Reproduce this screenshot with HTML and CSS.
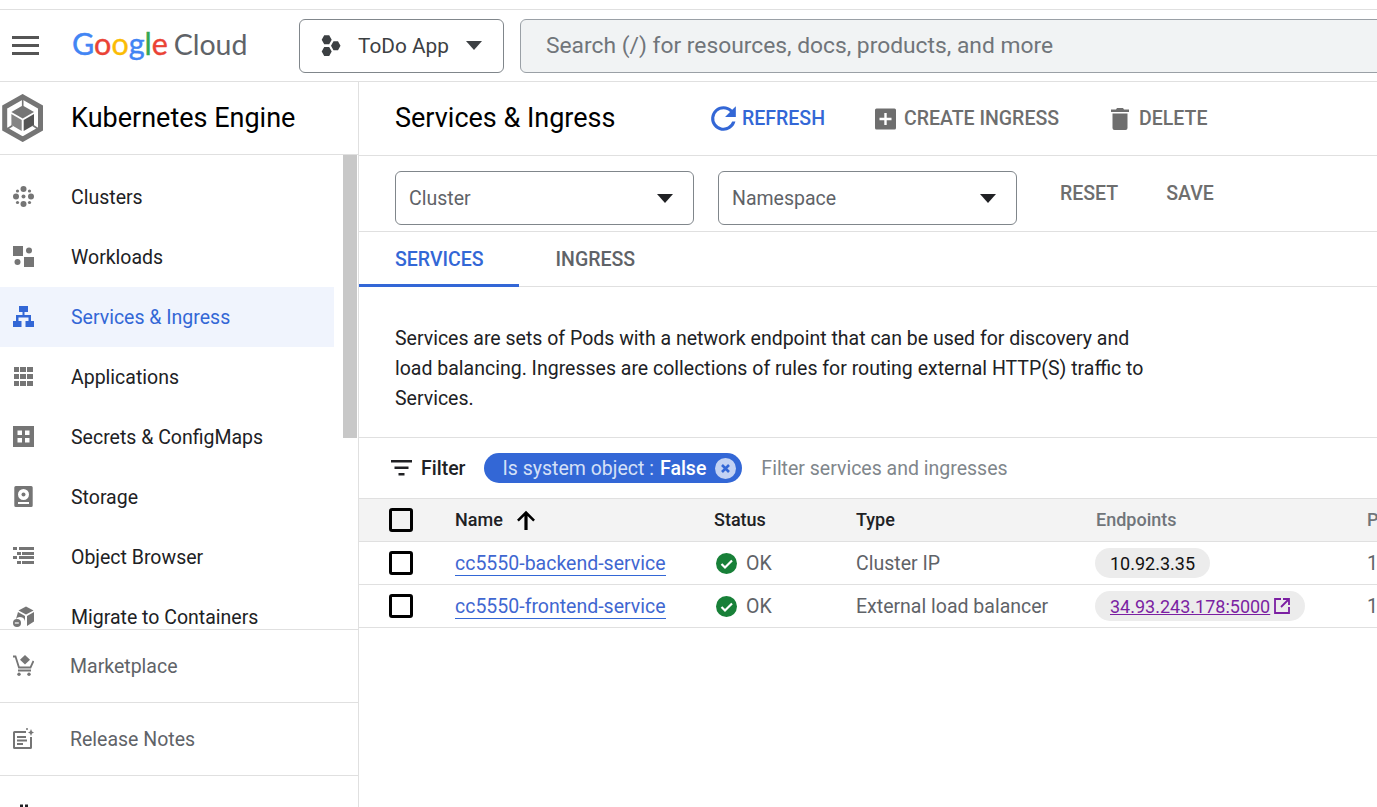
FILE: index.html
```html
<!DOCTYPE html>
<html lang="en">
<head>
    <meta charset="UTF-8">
    <meta name="viewport" content="width=device-width, initial-scale=1.0">
    <title>Services &amp; Ingress - Kubernetes Engine</title>
    <link rel="stylesheet" href="styles.css">
</head>
<body>
    <div class="top-strip"></div>

    <header class="topbar">
        <svg class="menu-icon" width="27" height="20" viewBox="0 0 27 20"><path d="M0 0h27v3H0zM0 8h27v3H0zM0 16h27v3H0z"/></svg>
        <div class="logo">
            <span class="g-blue">G</span><span class="g-red">o</span><span class="g-yellow">o</span><span class="g-blue">g</span><span class="g-green">l</span><span class="g-red">e</span>
            <span class="logo-cloud">Cloud</span>
        </div>
        <button class="project-btn">
            <svg width="22" height="22" viewBox="0 0 22 22" fill="#3c4043"><path d="M1.700 4.800l2.500-4.500h5l2.500 4.500-2.500 4.500h-5zM1.700 16.500l2.500-4.500h5l2.500 4.500-2.500 4.500h-5zM11 10.700l2.500-4.500h4.500l2.500 4.500-2.500 4.500h-4.500z"/></svg>
            <span>ToDo App</span>
            <i class="caret caret-gray"></i>
        </button>
        <div class="search">Search (/) for resources, docs, products, and more</div>
    </header>

    <div class="layout">
        <aside class="sidebar">
            <div class="side-head">
                <svg class="k8s-icon" width="44" height="48" viewBox="0 0 44 48">
                    <path d="M21.700 2.800L39.500 13V35L21.700 45.200 3.700 35V13z" fill="none" stroke="#757575" stroke-width="5"/>
                    <path d="M21.700 5v7M5.500 35.500l6-4M38 35.500l-6-4" stroke="#757575" stroke-width="1.600" fill="none"/>
                    <path d="M21.700 11.500L33 18l-11.300 6.500L10.400 18z" fill="#757575"/>
                    <path d="M10.400 20l10.300 6v11l-10.300-6z" fill="#858585"/>
                    <path d="M33 20l-10.300 6v11L33 31z" fill="#555"/>
                </svg>
                <span class="side-title">Kubernetes Engine</span>
            </div>

            <div class="side-scroll">
                <ul class="nav">
                    <li class="nav-item">
                        <svg class="nav-icon" viewBox="0 0 21 21"><circle cx="10.500" cy="3" r="3"/><circle cx="10.500" cy="18" r="3"/><circle cx="3" cy="10.500" r="3"/><circle cx="18" cy="10.500" r="3"/><circle cx="10.500" cy="10.500" r="2"/><circle cx="4.500" cy="5" r="1.600"/><circle cx="16.500" cy="5" r="1.600"/><circle cx="4.500" cy="16.500" r="1.600"/><circle cx="16.500" cy="16.500" r="1.600"/></svg>
                        Clusters
                    </li>
                    <li class="nav-item">
                        <svg class="nav-icon" viewBox="0 0 21 21"><path d="M0 0h10v10H0zM11 11h10v10H11z"/><circle cx="16" cy="4.500" r="3"/><circle cx="4.500" cy="16" r="3"/></svg>
                        Workloads
                    </li>
                    <li class="nav-item active">
                        <svg class="nav-icon" viewBox="0 0 21 21"><path d="M6 0h9v6h-3.500v3H18v6h3v6h-8.500v-6h3v-3.500h-10V15h3v6H0v-6h3V9h6.500V6H6z"/></svg>
                        Services &amp; Ingress
                    </li>
                    <li class="nav-item">
                        <svg class="nav-icon" viewBox="0 0 21 21"><path d="M1 1h5v5H1zM7 1h6v5H7zM14 1h6v5h-6zM1 8h5v5H1zM7 8h6v5H7zM14 8h6v5h-6zM1 15h5v5H1zM7 15h6v5H7zM14 15h6v5h-6z"/></svg>
                        Applications
                    </li>
                    <li class="nav-item">
                        <svg class="nav-icon" viewBox="0 0 21 21"><path fill-rule="evenodd" d="M0 0h21v21H0zM4.500 4.500v4.500h4.500V4.500zM12 4.500v4.500h4.500V4.500zM4.500 12v4.500h4.500V12zM12 12v4.500h4.500V12z"/></svg>
                        Secrets &amp; ConfigMaps
                    </li>
                    <li class="nav-item">
                        <svg class="nav-icon" viewBox="0 0 21 21"><path fill-rule="evenodd" d="M2.800 0h15.400a1.500 1.500 0 0 1 1.500 1.500v18a1.500 1.500 0 0 1-1.500 1.500H2.800a1.500 1.500 0 0 1-1.500-1.500v-18A1.500 1.500 0 0 1 2.800 0zM10.500 3a5.500 5.500 0 1 0 0 11 5.500 5.500 0 0 0 0-11zM5 16v2h11v-2z"/><circle cx="10.500" cy="8.500" r="2"/></svg>
                        Storage
                    </li>
                    <li class="nav-item">
                        <svg class="nav-icon" viewBox="0 0 21 21"><path d="M0 1h4v3H0zM6 1h15v3H6zM4 6h4v3H4zM9 6h12v3H9zM0 10h4v3H0zM6 10h15v3H6zM4 15h4v3H4zM9 15h12v3H9z"/></svg>
                        Object Browser
                    </li>
                    <li class="nav-item">
                        <svg class="nav-icon" viewBox="0 0 21 21"><path d="M13 .5l7.500 4-7.500 4-7.500-4zM21 6v9.500L14 20V10zM5 6l7 4v5.500a5 5 0 0 0-9-2.500z"/><circle cx="4" cy="17" r="4"/><path d="M1.800 16.400h4v1.200h-4z" fill="#fff"/></svg>
                        Migrate to Containers
                    </li>
                </ul>
                <div class="scroll-thumb"></div>
            </div>

            <div class="side-foot">
                <div class="foot-item">
                    <svg class="nav-icon" viewBox="0 0 21 21"><path d="M12 0l5 4.800-5 4.800-5-4.800z"/><path d="M0 1.500h2.500L6 12.500h11.500L20.500 6M5 15.500h13" fill="none" stroke="#757575" stroke-width="1.800"/><circle cx="6" cy="19.300" r="1.700"/><circle cx="16" cy="19.300" r="1.700"/></svg>
                    Marketplace
                </div>
                <div class="foot-item">
                    <svg class="nav-icon" viewBox="0 0 21 21"><path d="M13 4H1.500A.5.500 0 0 0 1 4.500v15a.5.500 0 0 0 .5.500h16a.5.500 0 0 0 .5-.5V9" fill="none" stroke="#757575" stroke-width="2"/><path d="M4 8h9v2H4zM4 11.500h10v2H4zM4 15h6v2H4zM18 1l1 2.500 2 1-2 1-1 2.500-1-2.500-2-1 2-1z"/><circle cx="14" cy="1" r="1"/></svg>
                    Release Notes
                </div>
                <div class="foot-item foot-cut">
                    <svg class="nav-icon" viewBox="0 0 21 21"><path d="M7 2.500h3V21H7zM12 2.500h3V21h-3z" fill="#202124"/></svg>
                </div>
            </div>
        </aside>

        <main class="content">
            <div class="page-head">
                <h1>Services &amp; Ingress</h1>
                <a class="action action-blue">
                    <svg width="37" height="37" viewBox="0 0 24 24" fill="#3367d6"><path d="M17.650 6.350A7.960 7.960 0 0 0 12 4a8 8 0 1 0 7.730 10h-2.080A6 6 0 1 1 12 6c1.660 0 3.140.69 4.220 1.780L13 11h7V4z"/></svg>
                    REFRESH
                </a>
                <a class="action action-create">
                    <svg width="21" height="22" viewBox="0 0 21 22"><rect width="21" height="21" y="0.500" rx="1.500" fill="#6e6e6e"/><path d="M9.300 5h2.400v4.800h4.800v2.400h-4.800V17H9.300v-4.800H4.500V9.800h4.800z" fill="#fff"/></svg>
                    CREATE INGRESS
                </a>
                <a class="action action-delete">
                    <svg width="18" height="22" viewBox="0 0 18 22" fill="#6e6e6e"><path d="M6 0h6l1 1.500h5V4H0V1.500h5zM1.500 5.500h15V20a2 2 0 0 1-2 2h-11a2 2 0 0 1-2-2z"/></svg>
                    DELETE
                </a>
            </div>

            <div class="filters">
                <div class="select"><span>Cluster</span><i class="caret"></i></div>
                <div class="select"><span>Namespace</span><i class="caret"></i></div>
                <a class="plain-btn btn-reset">RESET</a>
                <a class="plain-btn">SAVE</a>
            </div>

            <div class="tabs">
                <div class="tab tab-active">SERVICES</div>
                <div class="tab">INGRESS</div>
            </div>

            <p class="intro">Services are sets of Pods with a network endpoint that can be used for discovery and load balancing. Ingresses are collections of rules for routing external HTTP(S) traffic to Services.</p>

            <div class="filter-bar">
                <svg width="21" height="16" viewBox="0 0 21 16" fill="#202124"><path d="M0 0h21v2.500H0zM3.500 6.500h14V9h-14zM7.500 13h6v2.500h-6z"/></svg>
                <span class="filter-label">Filter</span>
                <span class="chip">
                    Is system object : <b>False</b>
                    <svg width="21" height="21" viewBox="0 0 21 21"><circle cx="10.500" cy="10.500" r="10.500" fill="#c3d2f3"/><path d="M7 7l7 7M14 7l-7 7" stroke="#3367d6" stroke-width="2.600"/></svg>
                </span>
                <span class="filter-hint">Filter services and ingresses</span>
            </div>

            <table class="services">
                <thead>
                    <tr>
                        <th class="col-check"><i class="checkbox"></i></th>
                        <th class="col-name">Name <svg class="sort-arrow" width="18" height="20" viewBox="0 0 18 20" fill="#000"><path d="M7.400 20V6L1.800 11.600 0 9.800 9 .8l9 9-1.800 1.800L10.600 6V20z"/></svg></th>
                        <th class="col-status">Status</th>
                        <th class="col-type">Type</th>
                        <th class="col-end th-muted">Endpoints</th>
                        <th class="col-ports th-muted">Ports</th>
                    </tr>
                </thead>
                <tbody>
                    <tr>
                        <td><i class="checkbox"></i></td>
                        <td><a class="svc-link">cc5550-backend-service</a></td>
                        <td><span class="status"><svg width="21" height="21" viewBox="0 0 21 21"><circle cx="10.500" cy="10.500" r="10.500" fill="#188038"/><path d="M5.500 11l3.500 3.500 7-7" fill="none" stroke="#fff" stroke-width="2.200"/></svg>OK</span></td>
                        <td>Cluster IP</td>
                        <td><span class="pill pill-plain">10.92.3.35</span></td>
                        <td>1</td>
                    </tr>
                    <tr>
                        <td><i class="checkbox"></i></td>
                        <td><a class="svc-link">cc5550-frontend-service</a></td>
                        <td><span class="status"><svg width="21" height="21" viewBox="0 0 21 21"><circle cx="10.500" cy="10.500" r="10.500" fill="#188038"/><path d="M5.500 11l3.500 3.500 7-7" fill="none" stroke="#fff" stroke-width="2.200"/></svg>OK</span></td>
                        <td>External load balancer</td>
                        <td><span class="pill"><a class="ext-link">34.93.243.178:5000</a><svg width="16" height="16" viewBox="0 0 16 16" fill="none" stroke="#7b1fa2" stroke-width="1.800"><path d="M7 1H1v14h14V9M9 1h6v6M15 1L7 9"/></svg></span></td>
                        <td>1</td>
                    </tr>
                </tbody>
            </table>
        </main>
    </div>
</body>
</html>
```

FILE: styles.css
```css
* {
    box-sizing: border-box;
}

html, body {
    margin: 0;
    height: 100%;
    overflow: hidden;
}

body {
    font-family: Roboto, "Liberation Sans", sans-serif;
    color: #202124;
    background: #fff;
    width: 1377px;
    height: 807px;
}

.top-strip {
    height: 10px;
    border-bottom: 1px solid #e0e0e0;
}

/* top bar */
.topbar {
    display: flex;
    align-items: center;
    height: 72px;
    border-bottom: 1px solid #e0e0e0;
    white-space: nowrap;
}

.menu-icon {
    margin-left: 12px;
    fill: #555;
    flex: none;
}

.logo {
    width: 227px;
    margin-left: 33px;
    padding-bottom: 4px;
    flex: none;
    font-family: Lato, sans-serif;
    font-size: 30.500px;
    line-height: 40px;
    -webkit-text-stroke: 0.4px;
}

.g-blue { color: #4285f4; }
.g-red { color: #ea4335; }
.g-yellow { color: #fbbc05; }
.g-green { color: #34a853; }

.logo-cloud {
    margin-left: -2px;
    font-size: 28.500px;
    color: #5f6368;
    -webkit-text-stroke: 0;
}

.project-btn {
    display: flex;
    align-items: center;
    flex: none;
    width: 205px;
    height: 54px;
    padding: 0 21px 0 20px;
    background: #fff;
    border: 1px solid #80868b;
    border-radius: 6px;
    font: 20.800px Roboto, sans-serif;
    color: #3c4043;
}

.project-btn span {
    margin-left: 16px;
}

.search {
    flex: none;
    width: 900px;
    height: 54px;
    margin-left: 16px;
    padding-left: 25px;
    line-height: 51px;
    font-size: 22.800px;
    color: #70757a;
    background: #f1f3f4;
    border: 1px solid #9aa0a6;
    border-radius: 6px;
}

.caret {
    display: block;
    width: 0;
    height: 0;
    margin-left: auto;
    border-left: 8.500px solid transparent;
    border-right: 8.500px solid transparent;
    border-top: 9px solid #202124;
}

.caret-gray {
    border-top-color: #3c4043;
}

.layout {
    display: flex;
    height: 725px;
}

/* sidebar */
.sidebar {
    flex: none;
    width: 359px;
    border-right: 1px solid #e0e0e0;
    overflow: hidden;
}

.side-head {
    display: flex;
    align-items: center;
    height: 73px;
    border-bottom: 1px solid #e0e0e0;
}

.k8s-icon {
    flex: none;
    margin-left: 1px;
}

.side-title {
    margin-left: 26px;
    font-size: 27px;
    color: #000;
}

.side-scroll {
    display: flex;
    height: 474px;
    overflow: hidden;
}

.nav {
    list-style: none;
    margin: 12px 0 0;
    padding: 0;
    width: 334px;
    flex: none;
}

.nav-item {
    display: flex;
    align-items: center;
    height: 60px;
    font-size: 19.500px;
    color: #202124;
}

.nav-icon {
    flex: none;
    width: 21px;
    height: 21px;
    margin: 0 37px 1px 13px;
    fill: #757575;
}

.nav-item.active {
    background: #f0f4fd;
    color: #3367d6;
}

.active .nav-icon {
    fill: #3367d6;
}

.scroll-thumb {
    flex: none;
    width: 14px;
    height: 283px;
    margin-left: 9px;
    background: #c8c8c8;
}

.side-foot {
    border-top: 1px solid #e0e0e0;
}

.foot-item {
    display: flex;
    align-items: center;
    height: 73px;
    font-size: 19.500px;
    color: #5f6368;
    border-bottom: 1px solid #e0e0e0;
}

.foot-item .nav-icon {
    margin-right: 36px;
}

.foot-cut {
    border-bottom: 0;
}

/* main column */
.content {
    flex: 1;
    min-width: 0;
    overflow: hidden;
}

.page-head {
    display: flex;
    align-items: center;
    height: 74px;
    padding-left: 36px;
    border-bottom: 1px solid #e0e0e0;
    white-space: nowrap;
}

.page-head h1 {
    width: 310px;
    margin: 0 0 2px;
    font-size: 27px;
    font-weight: 400;
    color: #000;
}

.action {
    display: flex;
    align-items: center;
    font-size: 19.500px;
    font-weight: 500;
    color: #6e6e6e;
}

.action-blue {
    color: #3367d6;
}

.action-create {
    gap: 8px;
    margin-left: 50px;
}

.action-delete {
    gap: 10px;
    margin-left: 52px;
}

.filters {
    display: flex;
    align-items: flex-start;
    height: 76px;
    padding: 15px 0 0 36px;
    border-bottom: 1px solid #e0e0e0;
}

.select {
    display: flex;
    align-items: center;
    width: 299px;
    height: 54px;
    margin-right: 24px;
    padding: 0 20px 0 13px;
    font-size: 19.500px;
    color: #5f6368;
    border: 1px solid #80868b;
    border-radius: 6px;
}

.plain-btn {
    margin-top: 11px;
    font-size: 19.500px;
    font-weight: 500;
    color: #6e6e6e;
    line-height: 24px;
}

.btn-reset {
    margin-left: 19px;
    margin-right: 48px;
}

.tabs {
    display: flex;
    height: 55px;
    border-bottom: 1px solid #e0e0e0;
}

.tab {
    padding: 0 36px;
    line-height: 56px;
    font-size: 19.500px;
    font-weight: 500;
    color: #5f6368;
}

.tab-active {
    height: 55px;
    margin-right: 1px;
    padding-right: 35px;
    color: #3367d6;
    border-bottom: 3px solid #3367d6;
}

.intro {
    width: 806px;
    height: 150px;
    margin: 0;
    padding: 37px 0 0 36px;
    font-size: 19.500px;
    line-height: 30px;
    color: #202124;
}

.filter-bar {
    display: flex;
    align-items: center;
    height: 62px;
    padding-left: 32px;
    border-top: 1px solid #e0e0e0;
    border-bottom: 1px solid #e0e0e0;
    white-space: nowrap;
}

.filter-label {
    margin-left: 9px;
    font-size: 19.500px;
    font-weight: 500;
    color: #202124;
}

.chip {
    display: flex;
    align-items: center;
    gap: 9px;
    height: 30px;
    margin-left: 18px;
    padding: 0 6px 0 19px;
    background: #3367d6;
    border-radius: 15px;
    font-size: 19.500px;
    color: #d5e0f7;
}

.chip b {
    font-weight: 500;
    color: #fff;
    margin-left: -3px;
}

.filter-hint {
    margin-left: 19px;
    font-size: 19.500px;
    color: #80868b;
}

/* table */
.services {
    width: 1100px;
    border-collapse: separate;
    border-spacing: 0;
    table-layout: fixed;
    white-space: nowrap;
}

.services th {
    height: 43px;
    padding: 0 0 2px;
    text-align: left;
    font-size: 18px;
    font-weight: 500;
    color: #202124;
    background: #f3f3f3;
    border-bottom: 1px solid #e0e0e0;
}

.services th.col-check {
    padding-bottom: 0;
}

.services td {
    height: 43px;
    padding: 0;
    font-size: 19.500px;
    color: #5f6368;
    border-bottom: 1px solid #e0e0e0;
}

.services th.th-muted {
    color: #70757a;
}

.col-check { width: 96px; }
.col-name { width: 259px; }
.col-status { width: 142px; }
.col-type { width: 239px; }

.services th.col-end {
    width: 272px;
    padding-left: 1px;
}

.col-ports { width: 92px; }

.checkbox {
    display: block;
    width: 24px;
    height: 24px;
    margin-left: 30px;
    border: 3px solid #000;
    border-radius: 3px;
}

.sort-arrow {
    vertical-align: -4px;
    margin-left: 10px;
}

.svc-link {
    color: #3f67d1;
    border-bottom: 1px solid #3367d6;
}

.status {
    display: flex;
    align-items: center;
    gap: 9px;
    margin-left: 2px;
}

.pill {
    display: inline-flex;
    align-items: center;
    gap: 4px;
    height: 30px;
    padding: 0 15px;
    font-size: 18px;
    background: #ececec;
    border-radius: 15px;
}

.pill-plain {
    color: #111;
}

.ext-link {
    color: #7b1fa2;
    text-decoration: underline;
}
```
